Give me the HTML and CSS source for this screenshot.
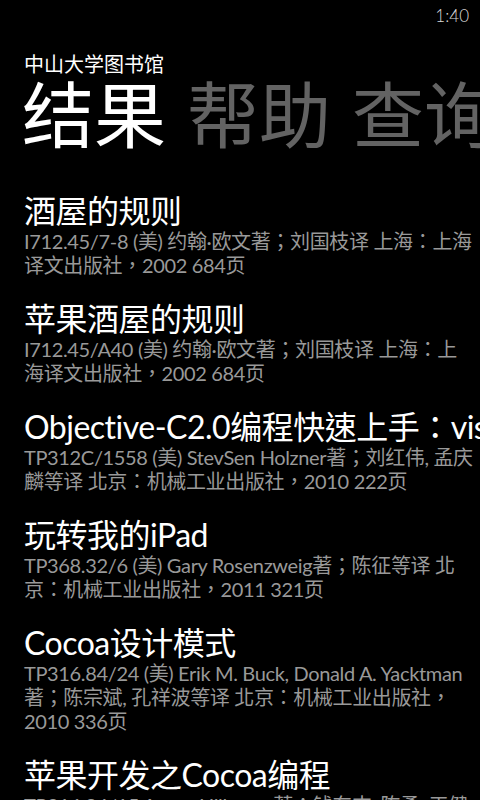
FILE: index.html
```html
<!DOCTYPE html>
<html lang="zh-CN">
<head>
<meta charset="utf-8">
<title>中山大学图书馆</title>
<link rel="stylesheet" href="styles.css">
</head>
<body>
<div class="screen">
  <div class="status"><span class="clock">1:40</span></div>
  <div class="app-title">中山大学图书馆</div>
  <div class="pivot-headers">
    <span class="pivot-item active">结果</span>
    <span class="pivot-item">帮助</span>
    <span class="pivot-item">查询</span>
  </div>
  <ul class="results">
    <li class="book">
      <div class="book-title">酒屋的规则</div>
      <div class="book-meta">I712.45/7-8 (美) 约翰·欧文著；刘国枝译 上海：上海<br>译文出版社，2002 684页</div>
    </li>
    <li class="book">
      <div class="book-title">苹果酒屋的规则</div>
      <div class="book-meta">I712.45/A40 (美) 约翰·欧文著；刘国枝译 上海：上<br>海译文出版社，2002 684页</div>
    </li>
    <li class="book">
      <div class="book-title">Objective-C2.0编程快速上手：visual quickstart guide</div>
      <div class="book-meta">TP312C/1558 (美) StevSen Holzner著；刘红伟, 孟庆<br>麟等译 北京：机械工业出版社，2010 222页</div>
    </li>
    <li class="book">
      <div class="book-title">玩转我的iPad</div>
      <div class="book-meta">TP368.32/6 (美) Gary Rosenzweig著；陈征等译 北<br>京：机械工业出版社，2011 321页</div>
    </li>
    <li class="book">
      <div class="book-title">Cocoa设计模式</div>
      <div class="book-meta">TP316.84/24 (美) Erik M. Buck, Donald A. Yacktman<br>著；陈宗斌, 孔祥波等译 北京：机械工业出版社，<br>2010 336页</div>
    </li>
    <li class="book">
      <div class="book-title">苹果开发之Cocoa编程</div>
      <div class="book-meta">TP316.84/15 Aaron Hillegass著；钱东杰, 陈勇, 王健<br>等译 北京：机械工业出版社，2009 390页</div>
    </li>
  </ul>
</div>
</body>
</html>
```

FILE: styles.css
```css
html, body {
  margin: 0;
  padding: 0;
  background: #000;
}

.screen {
  width: 480px;
  height: 800px;
  overflow: hidden;
  background: #000;
  color: #fff;
  font-family: "Lato", "Noto Sans CJK TC", sans-serif;
}

.status {
  height: 32px;
  display: flex;
  justify-content: flex-end;
  align-items: center;
  padding-right: 11px;
}

.clock {
  font-size: 17px;
  font-weight: 300;
  color: #d8d8d8;
  line-height: 20px;
}

.app-title {
  margin-top: 21px;
  padding-left: 24px;
  font-size: 20px;
  line-height: 22px;
  font-family: "Noto Sans CJK SC", sans-serif;
}

.pivot-headers {
  display: flex;
  gap: 21px;
  padding-left: 22px;
  white-space: nowrap;
  font-size: 72px;
  line-height: 72px;
  font-family: "Noto Sans CJK SC", sans-serif;
  font-weight: 400;
}

.pivot-item {
  flex: none;
  color: #636363;
}

.pivot-item.active {
  color: #fff;
}

.results {
  list-style: none;
  margin: 46px 0 0;
  padding: 0 0 0 24px;
}

.book {
  margin-bottom: 24px;
  font-feature-settings: "locl" 0;
}

.book-title {
  font-size: 32px;
  line-height: 36px;
  letter-spacing: -0.5px;
  white-space: nowrap;
  color: #fff;
}

.book-meta {
  font-size: 20px;
  line-height: 24px;
  letter-spacing: -0.35px;
  color: #999;
  white-space: nowrap;
}
```
